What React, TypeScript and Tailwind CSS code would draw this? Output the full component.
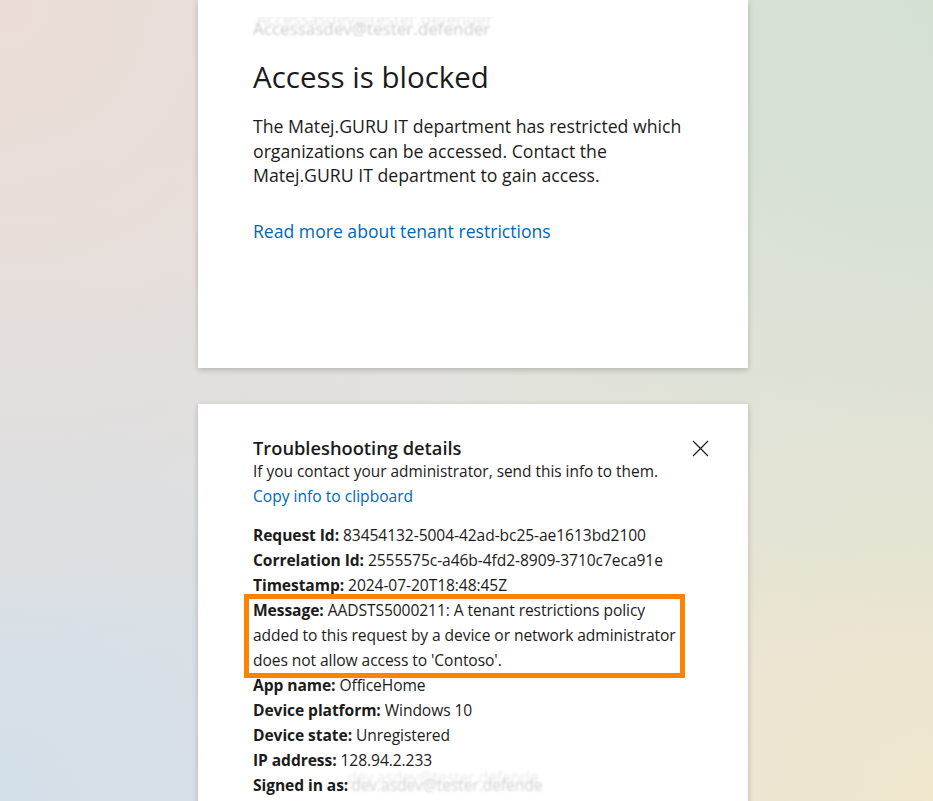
import React from 'react';

const details = [
  { label: 'Request Id:', value: '83454132-5004-42ad-bc25-ae1613bd2100' },
  { label: 'Correlation Id:', value: '2555575c-a46b-4fd2-8909-3710c7eca91e' },
  { label: 'Timestamp:', value: '2024-07-20T18:48:45Z' },
  { label: 'Message:', value: "AADSTS5000211: A tenant restrictions policy added to this request by a device or network administrator does not allow access to 'Contoso'." },
  { label: 'App name:', value: 'OfficeHome' },
  { label: 'Device platform:', value: 'Windows 10' },
  { label: 'Device state:', value: 'Unregistered' },
  { label: 'IP address:', value: '128.94.2.233' },
];

const App = () => {
  return (
    <div className="relative h-[801px] overflow-hidden bg-[#e2e2df] font-['Open_Sans',sans-serif] text-[#1b1b1b]">
      {/* soft tinted backdrop */}
      <div className="absolute inset-0 bg-[radial-gradient(circle_at_0%_0%,#ebdcd6_0%,transparent_55%),radial-gradient(circle_at_100%_0%,#d3e0d2_0%,transparent_55%),radial-gradient(circle_at_0%_100%,#d3dfe9_0%,transparent_55%),radial-gradient(circle_at_100%_100%,#efe6cc_0%,transparent_55%)]" />

      <div className="relative flex flex-col gap-[36px] pl-[198px]">
        <div className="w-[550px] h-[368px] bg-white shadow-[0_2px_6px_rgba(0,0,0,0.2)] px-[55px] pt-[17px]">
          <div className="h-[24px] w-[250px] overflow-hidden">
            <div className="text-[17px] leading-[24px] text-[#cbcbcb] blur-[1px] whitespace-nowrap [text-shadow:3px_-10px_1px_#e2e2e2]">
              Accessasdev@tester.defender
            </div>
          </div>
          <h1 className="mt-[18px] text-[29.5px] leading-[36px] text-[#1b1b1b]">Access is blocked</h1>
          <p className="mt-[19px] text-[17.7px] leading-[24.5px] text-[#1b1b1b]">
            The Matej.GURU IT department has restricted which organizations can be accessed. Contact the Matej.GURU IT department to gain access.
          </p>
          <a className="block mt-[31px] text-[17.6px] leading-[24px] text-[#0067b8]">Read more about tenant restrictions</a>
        </div>

        <div className="relative w-[550px] h-[420px] bg-white shadow-[0_2px_6px_rgba(0,0,0,0.2)] px-[55px] pt-[31px]">
          <div className="flex items-start justify-between">
            <div>
              <div className="text-[18.3px] leading-[25px] font-semibold text-[#1b1b1b]">Troubleshooting details</div>
              <div className="text-[15.4px] leading-[24px] text-[#1b1b1b]">If you contact your administrator, send this info to them.</div>
              <a className="block text-[15.6px] leading-[25px] text-[#0067b8]">Copy info to clipboard</a>
            </div>
            <button className="mt-[5px] mr-[-16px] text-[#1b1b1b]">
              <svg width="17" height="17" viewBox="0 0 17 17" fill="none" stroke="currentColor" strokeWidth="1.2">
                <path d="M1 1L16 16M16 1L1 16" />
              </svg>
            </button>
          </div>

          <div className="mt-[14px] text-[15.6px] leading-[25px] tracking-[-0.08px] text-[#1b1b1b]">
            {details.map((d) => (
              <div key={d.label}>
                <span className="font-bold">{d.label}</span> {d.value}
              </div>
            ))}
            <div className="flex items-center">
              <span className="font-bold">Signed in as:</span>
              <span className="ml-[3px] text-[#d2d2d2] blur-[0.8px] whitespace-nowrap [text-shadow:-4px_-8px_1px_#e8e8e8]">dev.asdev@tester.defende</span>
            </div>
          </div>

          {/* highlight around the message row */}
          <div className="absolute left-[46px] top-[190px] w-[441px] h-[84px] border-[5px] border-[#ff8300] pointer-events-none" />
        </div>
      </div>
    </div>
  );
};

export default App;
